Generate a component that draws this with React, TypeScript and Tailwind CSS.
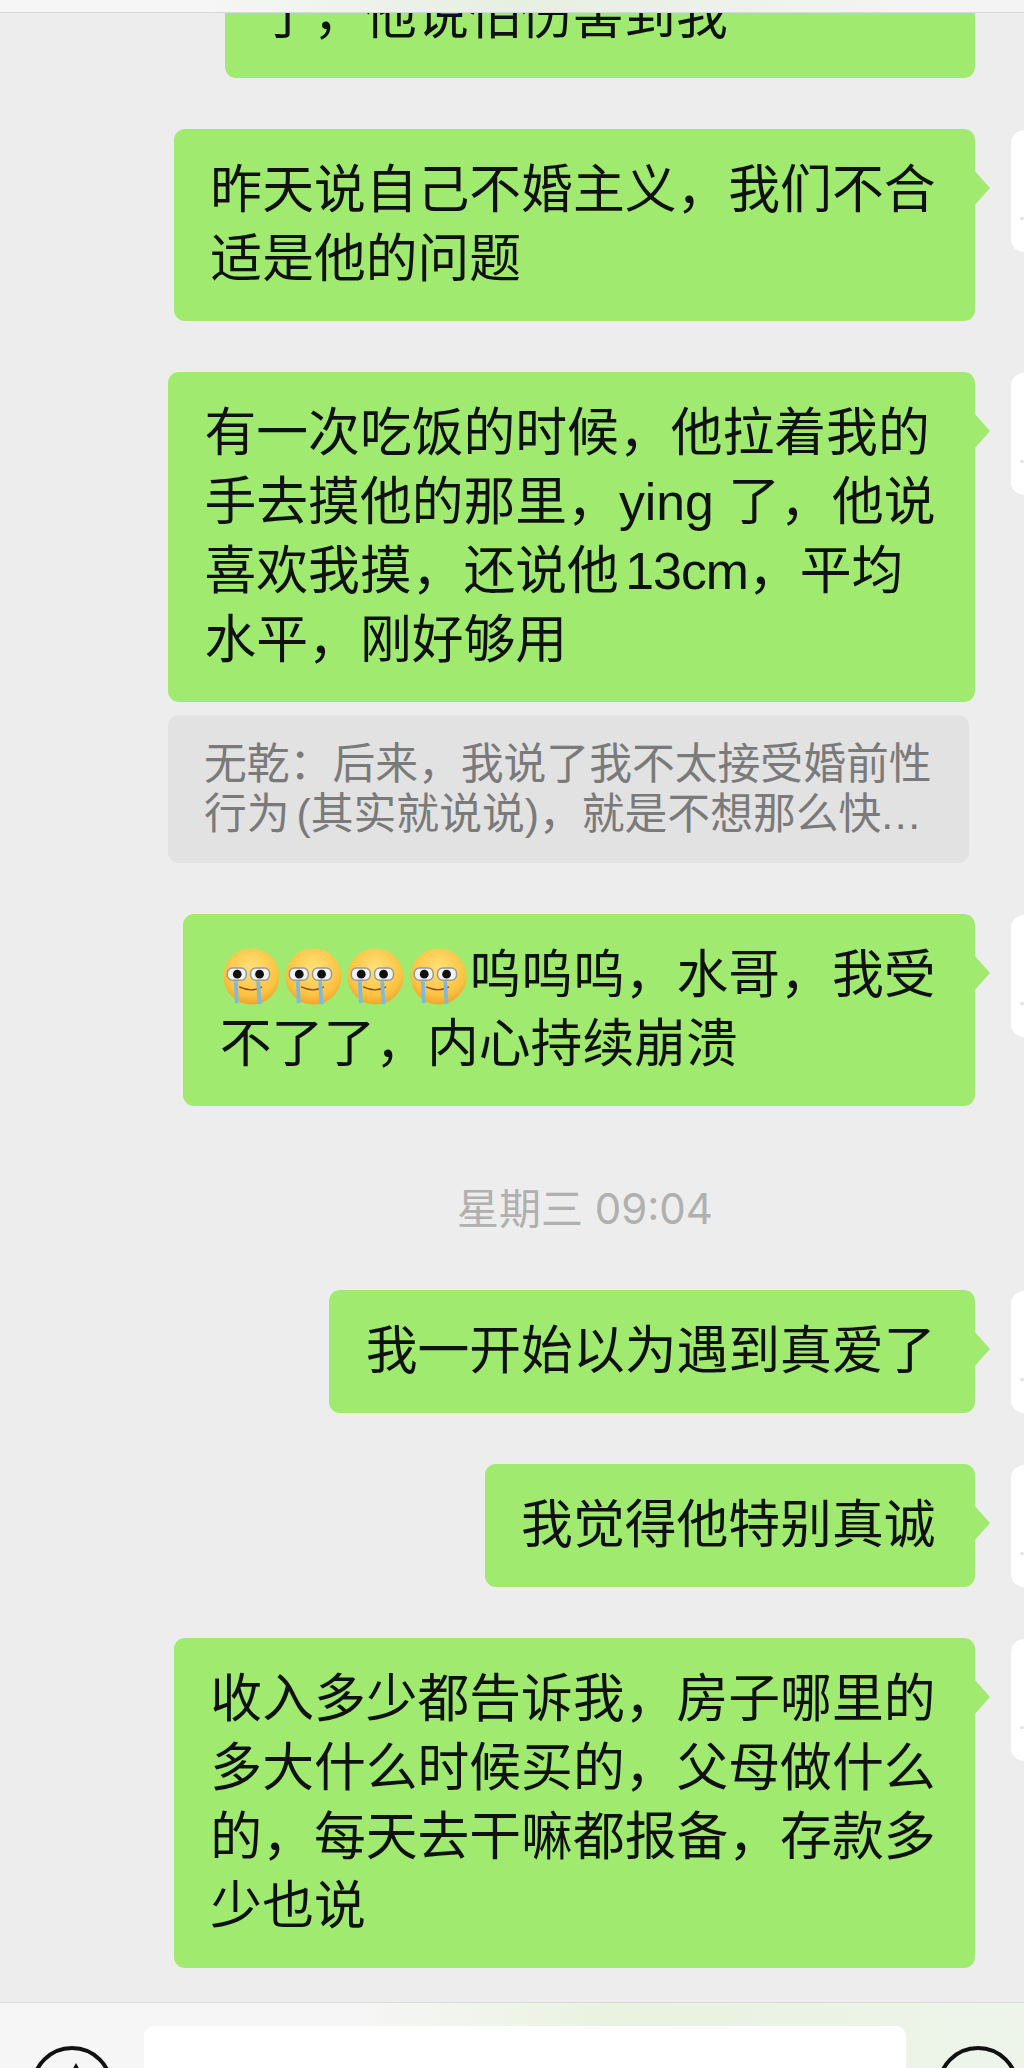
const sans = "font-['Liberation_Sans','Noto_Sans_CJK_SC',sans-serif]";

function CryFace() {
  return (
    <svg viewBox="0 0 60 60" className="inline-block w-[57px] h-[57px] mx-[2.7px] align-[-12px]">
      <defs>
        <radialGradient id="face" cx="50%" cy="35%" r="70%">
          <stop offset="0%" stopColor="#ffe07a" />
          <stop offset="70%" stopColor="#fbc23f" />
          <stop offset="100%" stopColor="#ee9a2c" />
        </radialGradient>
      </defs>
      <circle cx="30" cy="30" r="29.5" fill="url(#face)" />
      <path d="M17 41 Q30 47 41 41" fill="none" stroke="#8a4a12" strokeWidth="1.4" />
      <rect x="4.5" y="21" width="20" height="13" rx="5.5" fill="#f1f3f4" stroke="#9a9a92" strokeWidth="1.6" />
      <rect x="29" y="21" width="20" height="13" rx="5.5" fill="#f1f3f4" stroke="#9a9a92" strokeWidth="1.6" />
      <circle cx="15" cy="27.5" r="4.6" fill="#111" />
      <circle cx="38.5" cy="27.5" r="4.6" fill="#111" />
      <path d="M13.5 35 L14.5 58" stroke="#7cbbe0" strokeWidth="4" />
      <path d="M37 35 L38.5 59" stroke="#7cbbe0" strokeWidth="4" />
    </svg>
  );
}

function Avatar() {
  return (
    <div className="h-[122px] w-[13px] shrink-0 mt-[1px] rounded-l-[13px] bg-white flex items-end justify-end pb-[32px]">
      <span className="h-[3px] w-[4px] rounded-full bg-[#e4e4e4]" />
    </div>
  );
}

function Message({ first, children }: { first?: boolean; children: React.ReactNode }) {
  return (
    <div className="flex justify-end gap-[36px]">
      <div className={`relative rounded-[11px] bg-[#a0ea70] pl-[36.5px] pr-[39.5px] pt-[27px] pb-[27px] text-[51.8px] leading-[69px] text-[#111] whitespace-nowrap ${first ? "w-[750px]" : ""}`}>
        {children}
        {!first && (
          <span className="absolute right-[-15px] top-[41px] h-[36px] w-[16px] bg-[#a0ea70] [clip-path:polygon(0_0,100%_50%,0_100%)]" />
        )}
      </div>
      {first ? <div className="w-[13px] shrink-0" /> : <Avatar />}
    </div>
  );
}

function RoundButton({ children }: { children?: React.ReactNode }) {
  return (
    <svg viewBox="0 0 82 82" className="w-[82px] h-[82px] shrink-0 mt-[20px]">
      <circle cx="41" cy="41" r="39" fill="none" stroke="#111" strokeWidth="4" />
      {children}
    </svg>
  );
}

export default function App() {
  return (
    <div className={`${sans} h-[2068px] w-[1024px] overflow-hidden flex flex-col bg-[#ededed]`}>
      <div className="relative z-10 h-[13px] shrink-0 border-b border-[#d8d8d8] bg-[linear-gradient(90deg,#f6f6f6_20%,#e7efe0_50%,#f4f4f4_90%)]" />

      <div className="flex-1 min-h-0 overflow-hidden flex flex-col gap-[51px] mt-[-58px]">
        <Message first>了，他说怕伤害到我</Message>
        <Message>
          昨天说自己不婚主义，我们不合
          <br />
          适是他的问题
        </Message>

        <div className="flex flex-col gap-[13px]">
          <Message>
            有一次吃饭的时候，他拉着我的
            <br />
            手去摸他的那里，ying 了，他说
            <br />
            喜欢我摸，还说他 <span className="ml-[-8px] tracking-[-1px]">13cm</span>，平均
            <br />
            水平，刚好够用
          </Message>
          <div className="flex justify-end pr-[55px]">
            <div className="w-[801px] rounded-[11px] bg-[#e2e2e2] px-[36px] pt-[24px] pb-[24px] text-[42.8px] leading-[50px] text-[#7a7a7a] whitespace-nowrap">
              无乾：后来，我说了我不太接受婚前性
              <br />
              行为 <span className="ml-[-5px]">(其实就说说)</span>，就是不想那么快<span className="tracking-[1.5px]">...</span>
            </div>
          </div>
        </div>

        <div className="flex flex-col">
          <Message>
            <CryFace />
            <CryFace />
            <CryFace />
            <CryFace />
            呜呜呜，水哥，我受
            <br />
            不了了，内心持续崩溃
          </Message>
          <div className="flex justify-end pr-[311px] mt-[78px] mb-[5px] font-['Inter','Noto_Sans_CJK_SC',sans-serif] text-[42px] leading-[50px] text-[#b0b0b0]">
            星期三 09:04
          </div>
        </div>

        <Message>我一开始以为遇到真爱了</Message>
        <Message>我觉得他特别真诚</Message>
        <Message>
          收入多少都告诉我，房子哪里的
          <br />
          多大什么时候买的，父母做什么
          <br />
          的，每天去干嘛都报备，存款多
          <br />
          少也说
        </Message>
      </div>

      <div className="h-[66px] shrink-0 overflow-hidden border-t border-[#d9d9d9] bg-[linear-gradient(90deg,#f6f6f6_35%,#e9f3e0_60%,#eef4ea_100%)] flex justify-between pl-[31px] pr-[5px] pt-[23px]">
        <RoundButton>
          <path d="M45 17 L40 26 H50 Z" fill="#111" />
        </RoundButton>
        <div className="h-[60px] w-[762px] rounded-[10px] bg-white" />
        <RoundButton />
      </div>
    </div>
  );
}
